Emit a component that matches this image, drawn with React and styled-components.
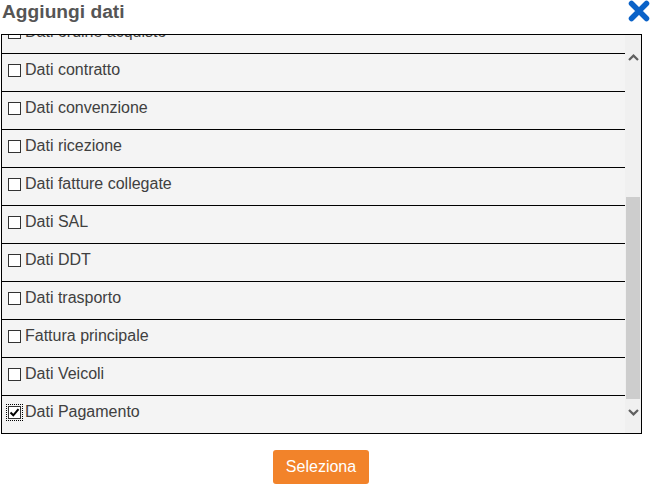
import React, { useLayoutEffect, useRef, useState } from 'react'
import styled, { createGlobalStyle } from 'styled-components'

const GlobalStyle = createGlobalStyle`
    html, body {
        margin: 0;
        padding: 0;
        background: #fff;
        font-family: Arial, "Liberation Sans", sans-serif;
    }
`;

const Page = styled.div`
    width: 650px;
`;

const Header = styled.div`
    display: flex;
    justify-content: space-between;
    align-items: flex-start;
    height: 34px;
    padding-left: 2px;
`;

const Title = styled.h3`
    margin: 0;
    font-size: 19.2px;
    line-height: 24px;
    font-weight: bold;
    color: #555;
`;

const CloseButton = styled.button`
    display: flex;
    width: 22px;
    height: 22px;
    padding: 0;
    border: 0;
    background: none;
    cursor: pointer;
`;

const ListBox = styled.div`
    display: flex;
    box-sizing: border-box;
    width: 641px;
    height: 400px;
    margin-left: 1px;
    border: 1px solid #000;
    background: #f4f4f4;
`;

const Viewport = styled.div`
    flex: 1;
    overflow: hidden;
`;

const Row = styled.label`
    display: flex;
    align-items: flex-start;
    gap: 4px;
    box-sizing: border-box;
    height: 38px;
    padding: 6px 0 0 6px;
    border-bottom: 1px solid #000;
    font-size: 16px;
    line-height: 19px;
    color: #404040;
    cursor: pointer;

    &:last-child {
        height: 37px;
        border-bottom: 0;
    }
`;

const Check = styled.span`
    display: flex;
    align-items: center;
    justify-content: center;
    flex: none;
    box-sizing: border-box;
    width: 13px;
    height: 13px;
    margin-top: 4px;
    border: 1px solid #333;
    background: #fff;
    outline: ${p => (p.$focus ? '1px dotted #000' : 'none')};
    outline-offset: 1px;
`;

const Scrollbar = styled.div`
    display: flex;
    flex-direction: column;
    width: 16px;
    background: #f0f0f0;
`;

const Arrow = styled.div`
    display: flex;
    justify-content: center;
    align-items: flex-start;
    height: ${p => p.$h}px;
    padding-top: ${p => p.$top}px;
    box-sizing: border-box;
`;

const Track = styled.div`
    flex: 1;
    display: flex;
    flex-direction: column;
    justify-content: flex-end;
    align-items: center;
`;

const Thumb = styled.div`
    width: 14px;
    height: 202px;
    background: #cdcdcd;
`;

const Footer = styled.div`
    display: flex;
    justify-content: center;
    width: 642px;
    padding-top: 16px;
`;

const SelectButton = styled.button`
    height: 34px;
    padding: 0 13px;
    border: 0;
    border-radius: 3px;
    background: #f2832a;
    color: #fff;
    font-family: Arial, "Liberation Sans", sans-serif;
    font-size: 16px;
    cursor: pointer;
`;

const ITEMS = [
    'Dati generali documento',
    'Dati ritenuta',
    'Dati bollo',
    'Dati cassa previdenziale',
    'Sconto maggiorazione',
    'Dati ordine acquisto',
    'Dati contratto',
    'Dati convenzione',
    'Dati ricezione',
    'Dati fatture collegate',
    'Dati SAL',
    'Dati DDT',
    'Dati trasporto',
    'Fattura principale',
    'Dati Veicoli',
    'Dati Pagamento'
]

const Chevron = ({ up }) => (
    <svg width="11" height="7" viewBox="0 0 11 7">
        <path
            d={up ? 'M1 6 L5.5 1.6 L10 6' : 'M1 1 L5.5 5.4 L10 1'}
            fill="none"
            stroke="#606060"
            strokeWidth="2.2"
        />
    </svg>
)

export default function App() {
    const viewRef = useRef(null)
    const [checked, setChecked] = useState({ 'Dati Pagamento': true })

    // start scrolled to the bottom of the list
    useLayoutEffect(() => {
        const el = viewRef.current
        if (el) el.scrollTop = el.scrollHeight
    }, [])

    const toggle = name => setChecked(c => ({ ...c, [name]: !c[name] }))

    return (
        <Page>
            <GlobalStyle />
            <Header>
                <Title>Aggiungi dati</Title>
                <CloseButton aria-label="Chiudi">
                    <svg width="22" height="22" viewBox="0 0 22 22">
                        <path
                            d="M3.5 3.5 L18.5 18.5 M18.5 3.5 L3.5 18.5"
                            stroke="#0a62c8"
                            strokeWidth="5.5"
                            strokeLinecap="round"
                        />
                    </svg>
                </CloseButton>
            </Header>

            <ListBox>
                <Viewport ref={viewRef}>
                    {ITEMS.map(name => (
                        <Row key={name} onClick={() => toggle(name)}>
                            <Check $focus={name === 'Dati Pagamento'}>
                                {checked[name] && (
                                    <svg width="11" height="11" viewBox="0 0 11 11">
                                        <path
                                            d="M1.5 5.5 L4.3 8.3 L9.5 2.2"
                                            fill="none"
                                            stroke="#000"
                                            strokeWidth="2"
                                        />
                                    </svg>
                                )}
                            </Check>
                            {name}
                        </Row>
                    ))}
                </Viewport>
                <Scrollbar>
                    <Arrow $h={44} $top={19}><Chevron up /></Arrow>
                    <Track><Thumb /></Track>
                    <Arrow $h={34} $top={10}><Chevron /></Arrow>
                </Scrollbar>
            </ListBox>

            <Footer>
                <SelectButton>Seleziona</SelectButton>
            </Footer>
        </Page>
    )
}
